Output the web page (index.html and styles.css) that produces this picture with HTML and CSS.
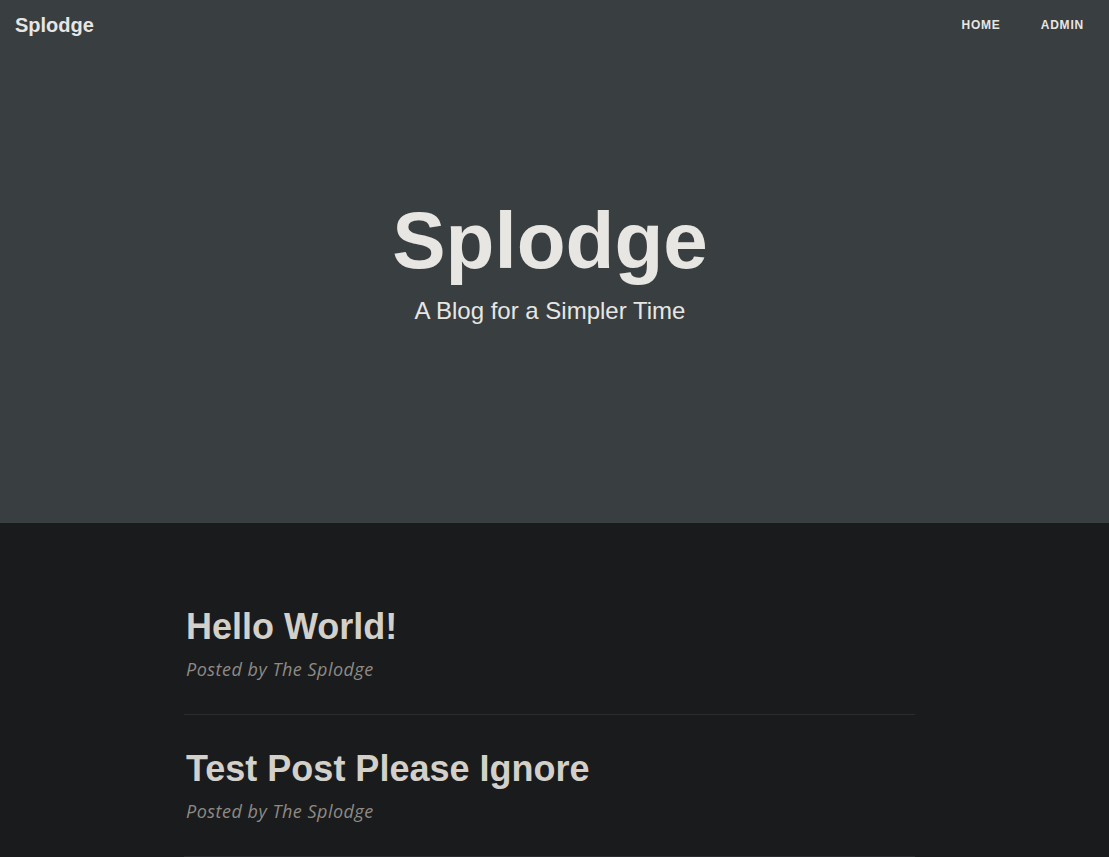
FILE: index.html
```html
<!DOCTYPE html>
<html lang="en">
<head>
<meta charset="utf-8">
<title>Splodge</title>
<link rel="stylesheet" href="styles.css">
</head>
<body>
<header class="masthead">
  <nav class="navbar">
    <a class="brand" href="#">Splodge</a>
    <ul class="nav-links">
      <li><a href="#">Home</a></li>
      <li><a href="#">Admin</a></li>
    </ul>
  </nav>
  <div class="site-heading">
    <h1>Splodge</h1>
    <span class="subheading">A Blog for a Simpler Time</span>
  </div>
</header>
<main class="posts">
  <article class="post-preview">
    <a href="#"><h2 class="post-title">Hello World!</h2></a>
    <p class="post-meta">Posted by The Splodge</p>
  </article>
  <hr class="divider">
  <article class="post-preview">
    <a href="#"><h2 class="post-title">Test Post Please Ignore</h2></a>
    <p class="post-meta">Posted by The Splodge</p>
  </article>
  <hr class="divider">
</main>
</body>
</html>
```
FILE: styles.css
```css
* { box-sizing: border-box; }
html, body { margin: 0; padding: 0; }
body {
  background: #1a1b1d;
  color: #e8e6e3;
  font-family: "Liberation Sans", Arial, sans-serif;
}
a { color: inherit; text-decoration: none; }

.masthead {
  background: #393e41;
  height: 523px;
  display: flex;
  flex-direction: column;
}
.navbar {
  height: 50px;
  display: flex;
  align-items: center;
  justify-content: space-between;
  padding: 0 5px 0 15px;
}
.brand {
  font-size: 20px;
  font-weight: 700;
  color: #e8e6e3;
  line-height: 1;
}
.nav-links {
  list-style: none;
  margin: 0;
  padding: 0;
  display: flex;
}
.nav-links a {
  display: block;
  padding: 0 20px;
  font-size: 12px;
  font-weight: 700;
  letter-spacing: 0.8px;
  text-transform: uppercase;
  color: #e8e6e3;
}
.site-heading {
  padding-top: 143px;
  text-align: center;
  padding-right: 9px;
}
.site-heading h1 {
  margin: 0;
  font-size: 80px;
  font-weight: 700;
  line-height: 1.2;
  color: #e8e6e3;
}
.subheading {
  display: block;
  margin-top: 8px;
  font-size: 24px;
  font-weight: 400;
  line-height: 1.2;
  color: #e8e6e3;
}

.posts {
  width: 731px;
  margin-left: 184px;
  padding-top: 82px;
}
.post-preview { padding-left: 2px; }
.post-title {
  margin: 0;
  font-size: 36px;
  font-weight: 700;
  line-height: 1.2;
  color: #d3cfc9;
}
.post-meta {
  margin: 8px 0 0 0;
  font-family: "Open Sans", "Noto Sans", sans-serif;
  font-style: italic;
  font-weight: 400;
  font-size: 18px;
  letter-spacing: 0.5px;
  line-height: 27px;
  color: #8f8a84;
}
.divider {
  margin: 31px 0 32px 0;
  border: 0;
  border-top: 1px solid #2a2c2f;
  height: 0;
}
```
